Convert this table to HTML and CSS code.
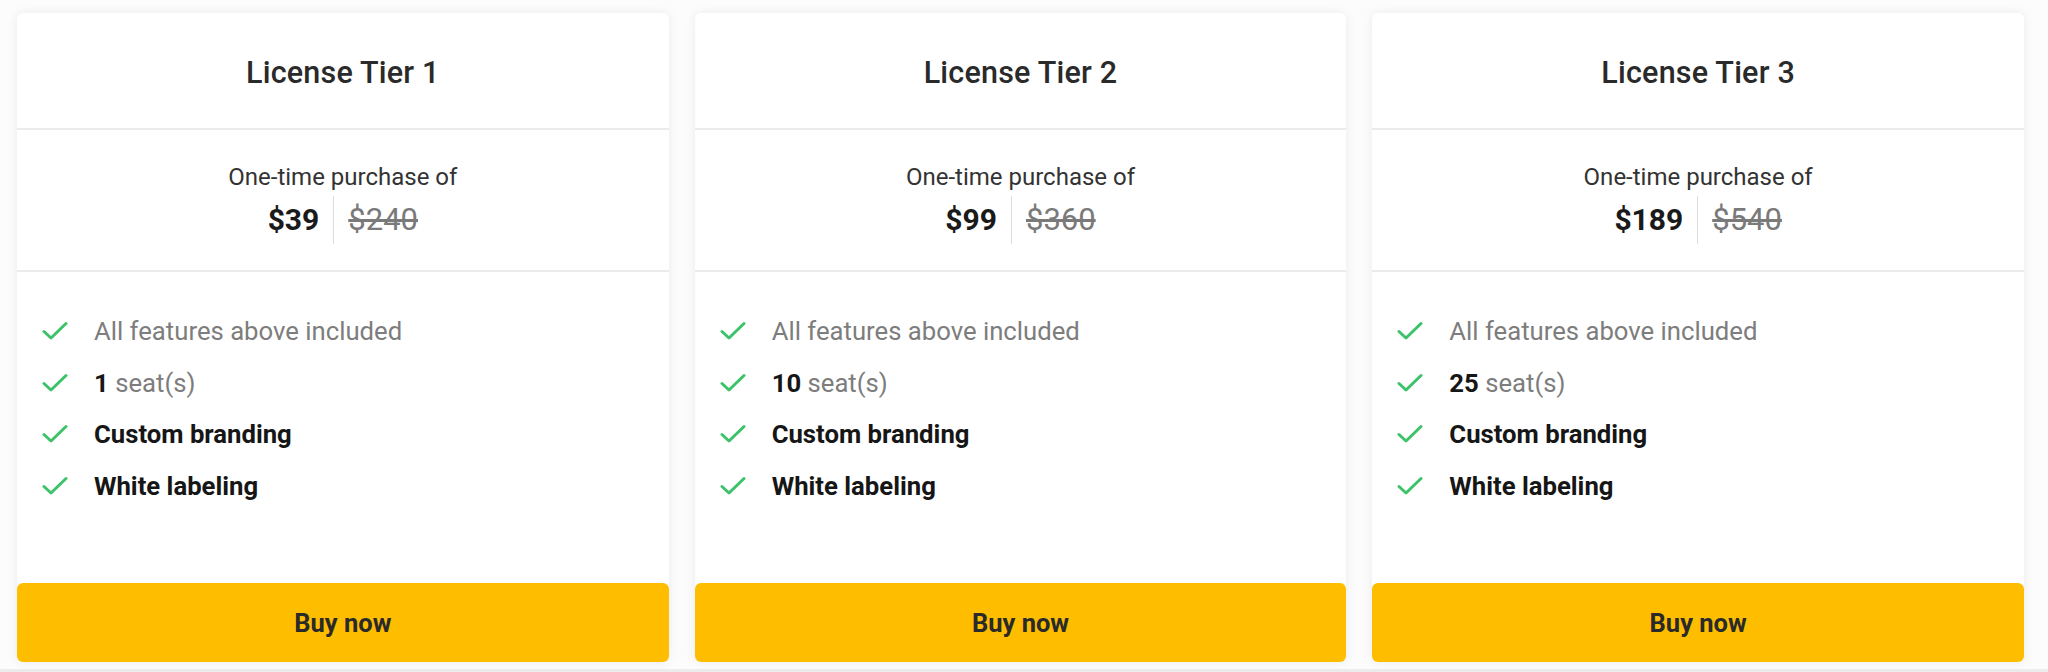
FILE: index.html
```html
<!DOCTYPE html>
<html lang="en">
<head>
<meta charset="utf-8">
<title>License Tiers</title>
<link rel="stylesheet" href="styles.css">
</head>
<body>
<main class="tiers">
  <section class="card">
    <header class="card-head"><h2 class="title">License Tier 1</h2></header>
    <div class="price-block">
      <div class="price-label">One-time purchase of</div>
      <div class="price-row"><span class="price-now">$39</span><span class="price-old">$240</span></div>
    </div>
    <ul class="features">
      <li class="feature"><svg class="check" viewBox="0 0 26 20"><path d="M2 10.5 L9 17 L24 2.5"/></svg><span class="muted">All features above included</span></li>
      <li class="feature"><svg class="check" viewBox="0 0 26 20"><path d="M2 10.5 L9 17 L24 2.5"/></svg><span><b>1</b> <span class="muted">seat(s)</span></span></li>
      <li class="feature"><svg class="check" viewBox="0 0 26 20"><path d="M2 10.5 L9 17 L24 2.5"/></svg><b>Custom branding</b></li>
      <li class="feature"><svg class="check" viewBox="0 0 26 20"><path d="M2 10.5 L9 17 L24 2.5"/></svg><b>White labeling</b></li>
    </ul>
    <button class="buy">Buy now</button>
  </section>
  <section class="card">
    <header class="card-head"><h2 class="title">License Tier 2</h2></header>
    <div class="price-block">
      <div class="price-label">One-time purchase of</div>
      <div class="price-row"><span class="price-now">$99</span><span class="price-old">$360</span></div>
    </div>
    <ul class="features">
      <li class="feature"><svg class="check" viewBox="0 0 26 20"><path d="M2 10.5 L9 17 L24 2.5"/></svg><span class="muted">All features above included</span></li>
      <li class="feature"><svg class="check" viewBox="0 0 26 20"><path d="M2 10.5 L9 17 L24 2.5"/></svg><span><b>10</b> <span class="muted">seat(s)</span></span></li>
      <li class="feature"><svg class="check" viewBox="0 0 26 20"><path d="M2 10.5 L9 17 L24 2.5"/></svg><b>Custom branding</b></li>
      <li class="feature"><svg class="check" viewBox="0 0 26 20"><path d="M2 10.5 L9 17 L24 2.5"/></svg><b>White labeling</b></li>
    </ul>
    <button class="buy">Buy now</button>
  </section>
  <section class="card">
    <header class="card-head"><h2 class="title">License Tier 3</h2></header>
    <div class="price-block">
      <div class="price-label">One-time purchase of</div>
      <div class="price-row"><span class="price-now">$189</span><span class="price-old">$540</span></div>
    </div>
    <ul class="features">
      <li class="feature"><svg class="check" viewBox="0 0 26 20"><path d="M2 10.5 L9 17 L24 2.5"/></svg><span class="muted">All features above included</span></li>
      <li class="feature"><svg class="check" viewBox="0 0 26 20"><path d="M2 10.5 L9 17 L24 2.5"/></svg><span><b>25</b> <span class="muted">seat(s)</span></span></li>
      <li class="feature"><svg class="check" viewBox="0 0 26 20"><path d="M2 10.5 L9 17 L24 2.5"/></svg><b>Custom branding</b></li>
      <li class="feature"><svg class="check" viewBox="0 0 26 20"><path d="M2 10.5 L9 17 L24 2.5"/></svg><b>White labeling</b></li>
    </ul>
    <button class="buy">Buy now</button>
  </section>
</main>
</body>
</html>
```

FILE: styles.css
```css
* { box-sizing: border-box; }
html, body { margin: 0; padding: 0; }
body {
  width: 2048px;
  height: 672px;
  background: #ececec;
  font-family: Roboto, "Liberation Sans", sans-serif;
  color: #1a1a1a;
  overflow: hidden;
}
.tiers {
  height: 669px;
  background: #fcfcfc;
  display: grid;
  grid-template-columns: repeat(3, 1fr);
  gap: 26px;
  padding: 13px 24px 0 17px;
  align-items: start;
}
.card {
  background: #fff;
  border-radius: 6px;
  box-shadow: 0 0 12px rgba(0, 0, 0, 0.07);
  height: 649px;
  display: flex;
  flex-direction: column;
}
.card-head {
  height: 117px;
  display: flex;
  align-items: center;
  justify-content: center;
  padding-top: 4px;
  border-bottom: 2px solid #ebebeb;
}
.title {
  margin: 0;
  font-size: 30.5px;
  font-weight: 500;
  color: #2a2a2a;
  letter-spacing: 0.2px;
}
.price-block {
  height: 142px;
  border-bottom: 2px solid #ebebeb;
  display: flex;
  flex-direction: column;
  align-items: center;
  padding-top: 32px;
}
.price-label {
  font-size: 24px;
  color: #333;
  line-height: 30px;
}
.price-row {
  display: flex;
  align-items: center;
  margin-top: 4px;
  height: 48px;
}
.price-now {
  font-size: 30px;
  font-weight: 700;
  color: #1a1a1a;
  padding-right: 14px;
  border-right: 1px solid #ddd;
  line-height: 48px;
}
.price-old {
  font-size: 31px;
  color: #7a7a7a;
  text-decoration: line-through;
  padding-left: 14px;
  line-height: 48px;
}
.features {
  list-style: none;
  margin: 0;
  padding: 33px 0 0 25px;
  flex: 1;
}
.feature {
  display: flex;
  align-items: center;
  height: 51.8px;
  font-size: 25.7px;
}
.check {
  width: 26px;
  height: 20px;
  margin-right: 26px;
  flex: none;
}
.check path {
  fill: none;
  stroke: #3cc36a;
  stroke-width: 3;
  stroke-linecap: round;
  stroke-linejoin: round;
}
.muted { color: #7d7d7d; }
.feature b { font-weight: 700; color: #161616; }
.buy {
  height: 79px;
  border: 0;
  border-radius: 6px;
  background: #ffbd00;
  font-family: Roboto, "Liberation Sans", sans-serif;
  font-size: 25.5px;
  font-weight: 700;
  color: #2a2a2a;
  padding-top: 2px;
  cursor: pointer;
}
```
